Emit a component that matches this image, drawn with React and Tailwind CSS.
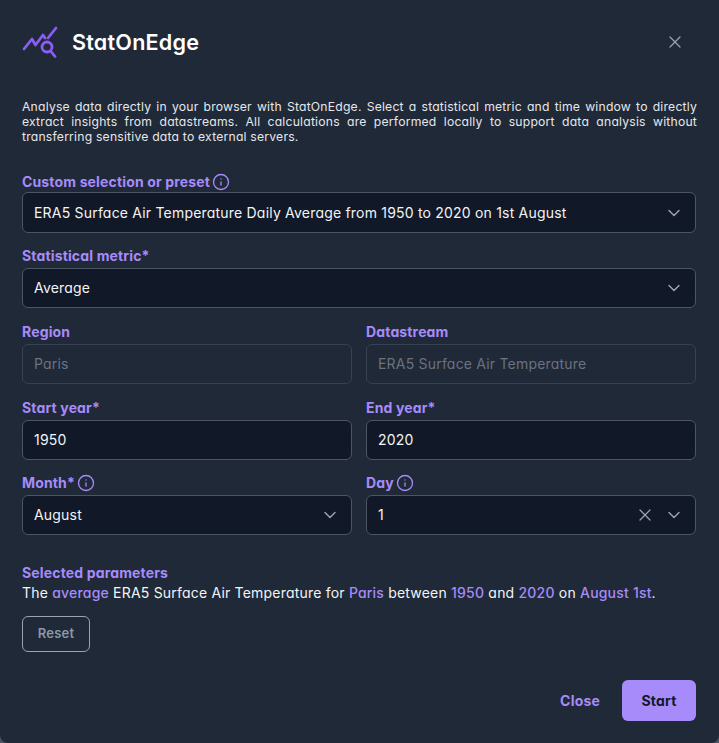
import React from "react";
import { ChevronDown, Info, X } from "lucide-react";

const font = "font-['Inter',sans-serif] [font-feature-settings:'cv11'] tracking-[0.2px]";

const Label = ({ children, info, first }) => (
    <div className={`flex items-center h-5 text-sm font-bold tracking-[0.15px] text-[#a78bfa] ${first ? "mb-0" : "mb-0.5"}`}>
        <span>{children}</span>
        {info && <Info className="w-[18px] h-[18px] ml-[2px]" strokeWidth={1.75} />}
    </div>
);

const Field = ({ value, select, clear, disabled, tall }) => (
    <div
        className={`flex items-center px-[11px] border rounded-md text-sm ${tall ? "h-[41px]" : "h-10"} ${
            disabled
                ? "bg-[#1f2937] border-[#374151] text-[#6b7280]"
                : "bg-[#111827] border-[#4b5563] text-[#f3f4f6]"
        }`}
    >
        <span className="flex-1 truncate">{value}</span>
        {clear && <X className="w-5 h-5 mr-[9px] text-[#9ca3af]" strokeWidth={1.5} />}
        {select && <ChevronDown className="w-5 h-5 text-[#9ca3af]" strokeWidth={1.75} />}
    </div>
);

const Hl = ({ children }) => <span className="text-[#a78bfa] font-medium">{children}</span>;

export default function App() {
    return (
        <div className={`w-[719px] h-[743px] bg-[#4b5563] ${font}`}>
            <div className="w-full h-full flex flex-col bg-[#1f2937] rounded-b-lg pl-[22px] pr-[23px] text-[#f3f4f6]">
                {/* Header */}
                <header className="flex items-center h-[84px]">
                    <svg width="36" height="32" viewBox="0 0 36 32" fill="none" stroke="#8b5cf6" strokeWidth="2.8" strokeLinecap="round" strokeLinejoin="round" className="shrink-0">
                        <path d="M2 23 L10 13 L13.5 19 L21 9 L23 12" />
                        <path d="M26 12 L34 2" />
                        <circle cx="25" cy="21" r="5" />
                        <path d="M29 25.5 L33 30.5" />
                    </svg>
                    <h1 className="ml-[14px] text-[21.6px] font-semibold text-white">StatOnEdge</h1>
                    <X className="w-5 h-5 ml-auto mr-[11px] text-[#9ca3af]" strokeWidth={1.5} />
                </header>

                <p className="text-[12.2px] leading-[15px] text-justify mt-[15px] mb-[28px] w-[675px] shrink-0 text-[#e5e7eb]">
                    Analyse data directly in your browser with StatOnEdge. Select a statistical metric and time window to directly extract insights from datastreams. All calculations are performed locally to support data analysis without transferring sensitive data to external servers.
                </p>

                {/* Form */}
                <Label info first>Custom selection or preset</Label>
                <Field value="ERA5 Surface Air Temperature Daily Average from 1950 to 2020 on 1st August" select tall />

                <div className="mt-[13px]">
                    <Label>Statistical metric*</Label>
                    <Field value="Average" select />
                </div>

                <div className="grid grid-cols-2 gap-x-[14px] gap-y-[13.5px] mt-[14px]">
                    <div>
                        <Label>Region</Label>
                        <Field value="Paris" disabled />
                    </div>
                    <div>
                        <Label>Datastream</Label>
                        <Field value="ERA5 Surface Air Temperature" disabled />
                    </div>
                    <div>
                        <Label>Start year*</Label>
                        <Field value="1950" />
                    </div>
                    <div>
                        <Label>End year*</Label>
                        <Field value="2020" />
                    </div>
                    <div>
                        <Label info>Month*</Label>
                        <Field value="August" select />
                    </div>
                    <div>
                        <Label info>Day</Label>
                        <Field value="1" select clear />
                    </div>
                </div>

                <div className="mt-[28px] text-sm font-bold tracking-[0.15px] text-[#a78bfa] leading-5">Selected parameters</div>
                <p className="text-sm leading-5">
                    The <Hl>average</Hl> ERA5 Surface Air Temperature for <Hl>Paris</Hl> between <Hl>1950</Hl> and <Hl>2020</Hl> on <Hl>August 1st</Hl>.
                </p>

                <button className="mt-[13px] w-[68px] h-9 rounded-md border border-[#9ca3af] text-[13px] font-semibold text-[#8b98a9]">
                    Reset
                </button>

                {/* Footer */}
                <div className="flex items-center justify-end mt-auto mb-[22px]">
                    <button className="mr-[22px] text-sm font-bold text-[#a78bfa]">Close</button>
                    <button className="w-[74px] h-[41px] rounded-md bg-[#a78bfa] text-sm font-bold text-[#111827]">Start</button>
                </div>
            </div>
        </div>
    );
}
